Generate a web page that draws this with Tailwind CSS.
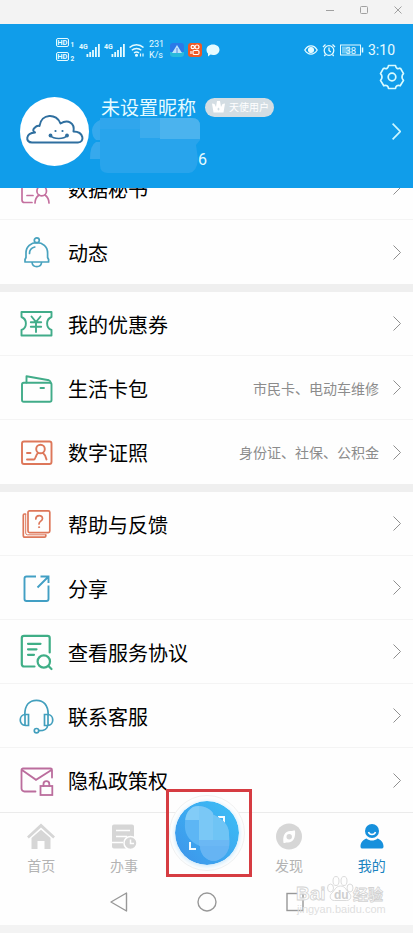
<!DOCTYPE html>
<html lang="zh-CN">

<head>
    <meta charset="UTF-8">
    <meta name="viewport" content="width=device-width, initial-scale=1.0">
    <title>我的</title>
    <script src="https://cdn.jsdelivr.net/npm/@tailwindcss/browser@4"></script>
</head>

<body class="bg-[#f3f3f3] font-['Roboto','Noto_Sans_CJK_SC',sans-serif] text-black">
    <div class="flex flex-col min-h-screen pb-2 overflow-hidden">

        <!-- window bar -->
        <div class="h-6 flex justify-end items-start gap-[18px] pt-0.5 pr-[7px] text-[#a0a0a0]">
            <button aria-label="最小化" class="w-4 h-4 flex items-center justify-center">
                <svg class="w-2 h-2" viewBox="0 0 8 8" fill="none" stroke="currentColor"><path d="M0 4.500h8" /></svg>
            </button>
            <button aria-label="最大化" class="w-4 h-4 flex items-center justify-center">
                <svg class="w-2 h-2" viewBox="0 0 8 8" fill="none" stroke="currentColor"><rect x=".5" y=".5" width="7" height="7" rx="1" /></svg>
            </button>
            <button aria-label="关闭" class="w-4 h-4 flex items-center justify-center">
                <svg class="w-2 h-2" viewBox="0 0 8 8" fill="none" stroke="currentColor"><path d="M.5.5l7 7M7.500.5l-7 7" /></svg>
            </button>
        </div>

        <header class="h-[164px] bg-[#109dea] text-white relative z-10 flex flex-col">
            <!-- status bar -->
            <div class="h-[52px] pl-14 pr-[18px] flex items-center justify-between text-[#e6fbff]">
                <div class="flex items-center gap-1">
                    <svg class="w-[19px] h-6" viewBox="0 0 19 24" fill="none" stroke="currentColor">
                        <rect x=".5" y=".5" width="12" height="8" rx="1.500" />
                        <rect x=".5" y="14.500" width="12" height="8" rx="1.500" />
                        <g fill="currentColor" stroke="none" font-size="7.500" font-weight="700">
                            <text x="1.300" y="7.200">HD</text>
                            <text x="1.300" y="21.200">HD</text>
                            <text x="14.500" y="8.500" font-size="6.500">1</text>
                            <text x="14.500" y="22.500" font-size="6.500">2</text>
                        </g>
                    </svg>
                    <svg class="w-[21px] h-4" viewBox="0 0 21 16" fill="currentColor">
                        <text x="0" y="7" font-size="7" font-weight="700">4G</text>
                        <path d="M7.500 12h1.800v3H7.500zM10.300 10h1.800v5h-1.800zM13.100 8h1.800v7h-1.800zM16 5h1.800v10H16zM19 2h1.800v13H19z" />
                    </svg>
                    <svg class="w-[21px] h-4" viewBox="0 0 21 16" fill="currentColor">
                        <text x="0" y="7" font-size="7" font-weight="700">4G</text>
                        <path d="M7.500 12h1.800v3H7.500zM10.300 10h1.800v5h-1.800zM13.100 8h1.800v7h-1.800zM16 5h1.800v10H16zM19 2h1.800v13H19z" />
                    </svg>
                    <svg class="w-4 h-4" viewBox="0 0 16 16" fill="none" stroke="currentColor" stroke-width="1.500">
                        <path d="M.5 5.500a10 10 0 0 1 14 0M2.800 8.300a7 7 0 0 1 9.500 0M5 11a4 4 0 0 1 5 0" />
                        <circle cx="7.500" cy="13.200" r=".8" fill="currentColor" />
                        <path d="M11.500 11.500v3M14 11.500v3" stroke-width="1.200" />
                    </svg>
                    <p class="w-[17px] text-[9px] leading-[11px]">231<br>K/s</p>
                    <svg class="w-[14px] h-4" viewBox="0 0 14 16">
                        <rect y="1" width="14" height="14" rx="3" fill="#2b79e8" />
                        <path d="M0 10h14v2a3 3 0 0 1-3 3H3a3 3 0 0 1-3-3z" fill="#29b9dc" />
                        <path d="M7 3l5 8H2z" fill="#bfe4fb" />
                        <path d="M7 6v5" stroke="#5b86e5" />
                    </svg>
                    <svg class="w-[14px] h-4" viewBox="0 0 14 16">
                        <rect y="1" width="14" height="14" rx="3" fill="#ee5a26" />
                        <g fill="none" stroke="#fff" stroke-width="1.200">
                            <circle cx="4.800" cy="5" r="1.700" />
                            <circle cx="9" cy="5" r="2" />
                            <rect x="5" y="8.500" width="6" height="4" rx="1.200" />
                            <path d="M3 9v3" />
                        </g>
                    </svg>
                    <svg class="w-[14px] h-4" viewBox="0 0 14 16" fill="currentColor">
                        <path d="M7 2.500c4 0 6.500 2.300 6.500 5.200S11 13 7 13c-.9 0-1.700-.1-2.500-.4L2 14.500v-3C.9 10.500.5 9.200.5 7.700.5 4.800 3 2.500 7 2.500z" />
                    </svg>
                </div>
                <div class="flex items-center gap-1">
                    <svg class="w-[14px] h-4" viewBox="0 0 14 16" fill="none" stroke="currentColor" stroke-width="1.300">
                        <path d="M.8 8C4 2.500 10 2.500 13.200 8 10 13.500 4 13.500.8 8z" />
                        <circle cx="7" cy="8" r="2.400" fill="currentColor" />
                    </svg>
                    <svg class="w-[14px] h-4" viewBox="0 0 14 16" fill="none" stroke="currentColor" stroke-width="1.300">
                        <circle cx="7" cy="8.500" r="4.800" />
                        <path d="M7 5.500v3l1.800 1.500M1 5l2.500-2.500M13 5l-2.500-2.500M3.500 12.500L2.300 14M10.500 12.500l1.200 1.500" />
                    </svg>
                    <svg class="w-6 h-4" viewBox="0 0 24 16" fill="none" stroke="currentColor">
                        <rect x=".5" y="3" width="20" height="10" />
                        <rect x="2" y="4.500" width="8" height="7" fill="currentColor" fill-opacity=".45" stroke="none" />
                        <path d="M22.500 5.500v5" stroke-width="1.500" />
                        <text x="5.500" y="11.500" font-size="9.500" fill="currentColor" stroke="none">38</text>
                    </svg>
                    <span class="text-sm">3:10</span>
                </div>
            </div>

            <button aria-label="设置" class="absolute right-2 top-10">
                <svg class="w-[26px] h-[26px]" viewBox="0 0 26 26" fill="none" stroke="#d9fbff" stroke-width="1.700" stroke-linejoin="round">
                    <path d="M9.500 1.500h7c.3 2.600 1.900 3.600 4.200 2.700l1 .4 2.800 5c-2 1.900-2 4.900 0 6.800l-3.300 5.400c-2.700-.9-4.400 0-4.700 2.700h-7c-.3-2.700-2-3.600-4.700-2.700l-3.300-5.400c2-1.900 2-4.900 0-6.800l2.800-5 1-.4c2.300.9 3.900-.1 4.200-2.700z" />
                    <circle cx="13" cy="13" r="3.800" />
                </svg>
            </button>

            <!-- profile -->
            <div class="flex items-start pl-5 pr-3 pt-[21px]">
                <div class="w-[69px] h-[69px] shrink-0 rounded-full bg-white flex items-center justify-center">
                    <svg class="w-[58px] h-[30px] overflow-visible" viewBox="0 0 58 30" fill="none" stroke="#2f6f9f" stroke-width="2" stroke-linejoin="round">
                        <path d="M6 25.500C-1 25.500-.5 16 9 15.500 4 13 11 8 13.500 9 15-4 31-4 34.500 6.500 42 2 49 6 47.500 14.500 58 14.500 59 25.500 52 25.500z" />
                        <path d="M24.500 18.500c3 4 13.500 4 16.500 0" stroke-width="1.500" />
                        <g fill="#2f6f9f" stroke="none">
                            <circle cx="24.500" cy="18.500" r="1.900" />
                            <circle cx="41" cy="18.500" r="1.900" />
                            <circle cx="29.500" cy="14" r="1.100" />
                            <circle cx="36.500" cy="14" r="1.100" />
                        </g>
                    </svg>
                </div>
                <div class="flex-1 relative pl-3">
                    <div class="flex items-center h-5 gap-[9px]">
                        <h1 class="text-[19px] leading-5 pt-1 text-[#e6fbff]">未设置昵称</h1>
                        <span class="h-[19px] w-[69px] rounded-full bg-[#d3dde3] text-white text-[10px] flex items-center pl-[7px] gap-1">
                            <svg class="w-[13px] h-3" viewBox="0 0 13 12" fill="currentColor">
                                <path fill-rule="evenodd" d="M0 2.500l2.500.5L4 6 5 0h3l1 6 1.500-3 2.500-.5L11.500 11.500h-10zM6.500 6.500L5.300 8l1.200 1.700L7.700 8z" />
                            </svg>
                            天使用户
                        </span>
                    </div>
                    <!-- masked phone number -->
                    <svg class="absolute left-[1px] top-[21px] w-[112px] h-[56px]" viewBox="0 0 112 56">
                        <path d="M10 0h92q8 0 8 8v14l-4 5 2 14q-1 13-9 14H18q-8 0-8-8z" fill="#28a4ec" />
                        <path d="M10 2v20H6q-4-3-4-10 1-7 8-10zM10 24v17H0q0-14 6-17z" fill="#36a9ed" />
                        <path d="M10 0h60v11H10z" fill="#30a6ed" />
                        <path d="M50 0h20v20H50z" fill="#3caced" />
                        <path d="M70 0h32q8 0 8 8v13H70z" fill="#4bb3ee" />
                    </svg>
                    <p class="pl-[97px] pt-[31px] text-base leading-6 relative text-[#e6fbff]">6</p>
                </div>
                <a href="#" aria-label="个人信息" class="pt-[26px]">
                    <svg class="w-[9px] h-[17px]" viewBox="0 0 9 17" fill="none" stroke="#c9f6ff" stroke-width="1.700"><path d="M.6.6l7.600 7.900L.6 16.400" /></svg>
                </a>
            </div>
        </header>

        <!-- menu -->
        <main class="bg-[#efefef] flex-1">
            <ul class="flex flex-col gap-2 -mt-8 text-xl">
                <li class="bg-[#fefefe]">
                    <a href="#" class="h-16 border-b border-[#f4f4f4] pl-5 pr-3 flex items-center">
                        <svg class="w-8 h-8 mr-4 overflow-visible" viewBox="0 0 32 32" fill="none" stroke="#c4709f" stroke-width="1.700" stroke-linecap="round">
                            <path d="M12 30.500H4.500a2.500 2.500 0 0 1-2.500-2.500V8h26v6M7 23.500h6" />
                            <circle cx="21.700" cy="19" r="4.800" />
                            <path d="M15 31c0-3 1.500-6 4-8M29 31c0-3-1.500-6-4-8" />
                        </svg>
                        <span class="flex-1 pt-1">数据秘书</span>
                        <svg class="w-2 h-[15px]" viewBox="0 0 8 15" fill="none" stroke="#8f8f8f"><path d="M.5.5l7 7-7 7" /></svg>
                    </a>
                    <a href="#" class="h-16 pl-5 pr-3 flex items-center">
                        <svg class="w-8 h-8 mr-4 overflow-visible" viewBox="0 0 32 32" fill="none" stroke="#48a2be" stroke-width="1.700" stroke-linecap="round" stroke-linejoin="round">
                            <circle cx="16.800" cy="4.300" r="2.500" />
                            <path d="M5 26v-2.500l1-2V17c0-6.500 5-10.300 10.800-10.300S27.600 10.500 27.600 17v4.500l1 2V26zM12 26.500c.8 5.500 8.800 5.500 9.600 0M9.500 17.500c0-3.300 2-5.800 5.300-6.500" />
                        </svg>
                        <span class="flex-1 pt-1">动态</span>
                        <svg class="w-2 h-[15px]" viewBox="0 0 8 15" fill="none" stroke="#8f8f8f"><path d="M.5.5l7 7-7 7" /></svg>
                    </a>
                </li>
                <li class="bg-[#fefefe]">
                    <a href="#" class="h-16 border-b border-[#f4f4f4] pl-5 pr-3 flex items-center">
                        <svg class="w-8 h-8 mr-4 overflow-visible" viewBox="0 0 32 32" fill="none" stroke="#41ac89" stroke-width="1.900" stroke-linecap="round" stroke-linejoin="round">
                            <path d="M1.500 4H31.500v5a7 7 0 0 0 0 13v5.500H1.500V22a7 7 0 0 0 0-13z" />
                            <path d="M11.500 8.500L16 14l4.500-5.500M16 14v10M10.800 14.300h10.400M10.800 18.800h10.400" />
                        </svg>
                        <span class="flex-1 pt-1">我的优惠券</span>
                        <svg class="w-2 h-[15px]" viewBox="0 0 8 15" fill="none" stroke="#8f8f8f"><path d="M.5.5l7 7-7 7" /></svg>
                    </a>
                    <a href="#" class="h-16 border-b border-[#f4f4f4] pl-5 pr-3 flex items-center">
                        <svg class="w-8 h-8 mr-4 overflow-visible" viewBox="0 0 32 32" fill="none" stroke="#41ac89" stroke-width="1.900" stroke-linecap="round" stroke-linejoin="round">
                            <rect x="2" y="10.800" width="29.500" height="19" rx="1.800" />
                            <path d="M6.500 10.500V4.300L29 8.300c1.200.3 1.700 1 1.700 2.500M20.500 16h3.500" />
                        </svg>
                        <span class="flex-1 pt-1">生活卡包</span>
                        <span class="text-sm text-[#8c8c8c] mr-[14px] pt-0.5">市民卡、电动车维修</span>
                        <svg class="w-2 h-[15px]" viewBox="0 0 8 15" fill="none" stroke="#8f8f8f"><path d="M.5.5l7 7-7 7" /></svg>
                    </a>
                    <a href="#" class="h-16 pl-5 pr-3 flex items-center">
                        <svg class="w-8 h-8 mr-4 overflow-visible" viewBox="0 0 32 32" fill="none" stroke="#dd775a" stroke-width="1.900" stroke-linecap="round">
                            <rect x="2" y="5.500" width="29.500" height="22.500" rx="2" />
                            <circle cx="20.500" cy="13" r="4.300" />
                            <path d="M7 17h3.500M7 23.500h7c1.700 0 1.500-4.500 4-6.500M23 17c2 1.500 3 3.800 3.500 6.500" />
                        </svg>
                        <span class="flex-1 pt-1">数字证照</span>
                        <span class="text-sm text-[#8c8c8c] mr-[14px] pt-0.5">身份证、社保、公积金</span>
                        <svg class="w-2 h-[15px]" viewBox="0 0 8 15" fill="none" stroke="#8f8f8f"><path d="M.5.5l7 7-7 7" /></svg>
                    </a>
                </li>
                <li class="bg-[#fefefe]">
                    <a href="#" class="h-16 border-b border-[#f4f4f4] pl-5 pr-3 flex items-center">
                        <svg class="w-8 h-8 mr-4 overflow-visible" viewBox="0 0 32 32" fill="none" stroke="#dd775a" stroke-width="1.700" stroke-linecap="round">
                            <rect x="8" y="2.800" width="21.800" height="21.800" rx="1.500" />
                            <path d="M5.500 6H4.500A1.200 1.200 0 0 0 3.300 7.200V27.500a1.700 1.700 0 0 0 1.700 1.700h19.500a1.300 1.300 0 0 0 1.300-1.300v-1" />
                            <path d="M5.700 6.500V25a1.800 1.800 0 0 0 1.800 1.800H25" stroke-width="1" />
                            <path d="M15.800 11c0-4.500 6.700-4.500 6.700-.5 0 2.800-3.500 2.500-3.500 5.500" />
                            <circle cx="19" cy="19.200" r=".6" fill="#dd775a" stroke-width=".8" />
                        </svg>
                        <span class="flex-1 pt-1">帮助与反馈</span>
                        <svg class="w-2 h-[15px]" viewBox="0 0 8 15" fill="none" stroke="#8f8f8f"><path d="M.5.5l7 7-7 7" /></svg>
                    </a>
                    <a href="#" class="h-16 border-b border-[#f4f4f4] pl-5 pr-3 flex items-center">
                        <svg class="w-8 h-8 mr-4 overflow-visible" viewBox="0 0 32 32" fill="none" stroke="#429fc4" stroke-width="1.900">
                            <path d="M16 4.500H6.500a2 2 0 0 0-2 2V27a2 2 0 0 0 2 2h20a2 2 0 0 0 2-2V13.500M17.500 15.500l11-11M20.500 4.500h8v6.500" />
                        </svg>
                        <span class="flex-1 pt-1">分享</span>
                        <svg class="w-2 h-[15px]" viewBox="0 0 8 15" fill="none" stroke="#8f8f8f"><path d="M.5.5l7 7-7 7" /></svg>
                    </a>
                    <a href="#" class="h-16 border-b border-[#f4f4f4] pl-5 pr-3 flex items-center">
                        <svg class="w-8 h-8 mr-4 overflow-visible" viewBox="0 0 32 32" fill="none" stroke="#3fae86" stroke-width="2.200" stroke-linecap="round">
                            <path d="M14.500 30.500H4a2.200 2.200 0 0 1-2.200-2.200V2A2.200 2.200 0 0 1 4-.2h23.500A2.200 2.200 0 0 1 29.700 2v14.500M8 7.800h12.500M8 13.300h8.500M8 18.800h6" />
                            <circle cx="23.800" cy="25.500" r="6.200" />
                            <path d="M28.500 30l3 3" />
                        </svg>
                        <span class="flex-1 pt-1">查看服务协议</span>
                        <svg class="w-2 h-[15px]" viewBox="0 0 8 15" fill="none" stroke="#8f8f8f"><path d="M.5.5l7 7-7 7" /></svg>
                    </a>
                    <a href="#" class="h-16 border-b border-[#f4f4f4] pl-5 pr-3 flex items-center">
                        <svg class="w-8 h-8 mr-4 overflow-visible" viewBox="0 0 32 32" fill="none" stroke="#429fbd" stroke-width="1.700" stroke-linecap="round">
                            <path d="M4.800 14.500C4.800 5 9.500.3 16.500.3S28.200 5 28.200 14.500" />
                            <path d="M8.500 14.500v11H5.500C-1.500 25.500-1.500 14.500 5.500 14.500zM5 15v10M24.500 14.500v11h3C34.500 25.500 34.500 14.500 27.500 14.500zM28 15v10" />
                            <path d="M27.500 26c-.3 3.500-3 4.700-8.500 4.700" />
                            <circle cx="16.500" cy="30.700" r="2.200" />
                        </svg>
                        <span class="flex-1 pt-1">联系客服</span>
                        <svg class="w-2 h-[15px]" viewBox="0 0 8 15" fill="none" stroke="#8f8f8f"><path d="M.5.5l7 7-7 7" /></svg>
                    </a>
                    <a href="#" class="h-16 pl-5 pr-3 flex items-center">
                        <svg class="w-8 h-8 mr-4 overflow-visible" viewBox="0 0 32 32" fill="none" stroke="#bb6d9d" stroke-width="1.800" stroke-linecap="round">
                            <path d="M15.500 27.500H4.500a3 3 0 0 1-3-3V6A1.500 1.500 0 0 1 3 4.500h27.500A1.500 1.500 0 0 1 32 6v7.500M2 6l14 9.800L31.500 6" />
                            <rect x="20.500" y="22" width="11.800" height="9" />
                            <path d="M23.500 22v-2c0-3.800 5.800-3.800 5.800 0v2" />
                        </svg>
                        <span class="flex-1 pt-1">隐私政策权</span>
                        <svg class="w-2 h-[15px]" viewBox="0 0 8 15" fill="none" stroke="#8f8f8f"><path d="M.5.5l7 7-7 7" /></svg>
                    </a>
                </li>
            </ul>
        </main>

        <!-- tab bar -->
        <nav class="bg-[#fefefe] border-t border-[#ebebeb] h-[68px] grid grid-cols-5 relative text-sm text-[#b3b3b3]">
            <a href="#" class="flex flex-col items-center pt-[9px] gap-1.5">
                <svg class="w-7 h-7" viewBox="0 0 28 28" fill="#d6d6d6">
                    <path d="M14 1.500l14 13-1.800 2L14 5.500 1.800 16.500 0 14.500z" />
                    <path d="M14 7.800l9.500 8.200V27h-6v-8h-7v8h-6V16z" />
                </svg>
                <span class="leading-5">首页</span>
            </a>
            <a href="#" class="flex flex-col items-center pt-[9px] gap-1.5">
                <svg class="w-7 h-7" viewBox="0 0 28 28">
                    <path d="M4 2.500h18a2 2 0 0 1 2 2V20l-8 6.500H4a2 2 0 0 1-2-2v-20a2 2 0 0 1 2-2z" fill="#d6d6d6" />
                    <path d="M6 8.500h14M6 14.500h11M2 20.500h11" stroke="#fefefe" stroke-width="1.500" />
                    <circle cx="20.500" cy="21" r="6.500" fill="#d6d6d6" stroke="#fefefe" stroke-width="1.500" />
                    <path d="M20.500 17.500V21.500h3.500" fill="none" stroke="#fefefe" stroke-width="1.500" />
                </svg>
                <span class="leading-5">办事</span>
            </a>
            <span></span>
            <a href="#" class="flex flex-col items-center pt-[9px] gap-1.5">
                <svg class="w-7 h-7" viewBox="0 0 28 28">
                    <circle cx="14" cy="14.500" r="13" fill="#d6d6d6" />
                    <path d="M20 8.500c.8 6.500-1.500 12-7 12-1.500 0-2.500-.5-3 .5l-1.500 0c-1-7 1-12 7-12 2 0 3-.5 4.500-.5z" fill="#fefefe" />
                    <circle cx="14.200" cy="14.700" r="2.700" fill="#d6d6d6" />
                </svg>
                <span class="leading-5">发现</span>
            </a>
            <a href="#" class="flex flex-col items-center pt-[9px] gap-1.5 text-[#1b83c0]">
                <svg class="w-7 h-7" viewBox="0 0 28 28" fill="#1790dc">
                    <circle cx="14" cy="9" r="7" />
                    <path d="M10.500 10c1 3.300 6 3.300 7 0" fill="none" stroke="#fefefe" stroke-width="1.500" />
                    <path d="M8.500 16.500c3.300 2.800 7.700 2.800 11 0 3.500 1.300 6 4 6 8 0 1.500-.8 2-2 2h-19c-1.200 0-2-.5-2-2 0-4 2.500-6.700 6-8z" />
                </svg>
                <span class="leading-5">我的</span>
            </a>

            <!-- raised scan button -->
            <button aria-label="扫码" class="absolute left-1/2 -translate-x-1/2 -top-[18px] w-[76px] h-[76px] rounded-full bg-[#fefefe] border border-[#f1f1f1] flex items-center justify-center">
                <svg class="w-16 h-16 rounded-full shadow-[0_1px_5px_#bfe3fa]" viewBox="0 0 64 64">
                    <defs>
                        <linearGradient id="scan" x1="1" y1="0" x2="0" y2="1">
                            <stop offset="0" stop-color="#3cc0f6" />
                            <stop offset="1" stop-color="#3d93ea" />
                        </linearGradient>
                        <clipPath id="smudge">
                            <path d="M18 6c8-3 18 1 21 8 7 3 16 10 15 20 3 14-4 24-14 26-10 0-15-8-15-15-10-4-16-12-15-22 0-9 3-14 8-17z" />
                        </clipPath>
                    </defs>
                    <circle cx="32" cy="32" r="32" fill="url(#scan)" />
                    <path d="M15 41v7h6M43 16h6v7" fill="none" stroke="#f2fbff" stroke-width="2" />
                    <g clip-path="url(#smudge)">
                        <rect width="64" height="64" fill="#5db6f5" />
                        <path d="M10 5h14v14H10z" fill="#82ccf7" />
                        <path d="M24 5h14v34H24z" fill="#7ac8f6" />
                        <path d="M38 14h16v25H38z" fill="#6fc4f5" />
                        <path d="M24 39h30v6H24z" fill="#6bb8f4" />
                        <path d="M24 45h30v19H24z" fill="#66b4f3" />
                    </g>
                </svg>
            </button>
            <!-- red frame around it -->
            <div class="absolute left-1/2 -ml-[41px] -top-6 w-[86px] h-[88px] border-[3px] border-[#d63c42] pointer-events-none"></div>
        </nav>

        <!-- system navigation -->
        <div class="bg-[#fefefe] h-[45px] flex justify-center items-center gap-[68px] pb-0.5 relative">
            <button aria-label="返回" class="w-5 h-5">
                <svg class="w-5 h-5" viewBox="0 0 20 20" fill="none" stroke="#989898" stroke-width="1.400" stroke-linejoin="round"><path d="M17.500 1v18L2 10z" /></svg>
            </button>
            <button aria-label="主屏幕" class="w-5 h-5">
                <svg class="w-5 h-5" viewBox="0 0 20 20" fill="none" stroke="#989898" stroke-width="1.400"><circle cx="10" cy="10" r="9" /></svg>
            </button>
            <button aria-label="最近任务" class="w-5 h-5">
                <svg class="w-5 h-5" viewBox="0 0 20 20" fill="none" stroke="#989898" stroke-width="1.400"><rect x="2" y="1.500" width="16" height="17" /></svg>
            </button>

            <!-- watermark -->
            <svg class="absolute right-6 -top-2 w-24 h-12 font-['Liberation_Sans','Noto_Sans_CJK_SC',sans-serif]" viewBox="0 0 96 48" fill="#fefefe" stroke="#d2d2d2" stroke-width=".8">
                <text x="3" y="28" font-size="19" font-weight="700">Bai</text>
                <ellipse cx="37.500" cy="16" rx="3" ry="4" />
                <ellipse cx="43" cy="9" rx="3" ry="4.500" />
                <ellipse cx="51" cy="9" rx="3" ry="4.500" />
                <ellipse cx="57" cy="16" rx="3" ry="4" />
                <path d="M47.500 14c5 0 6 5 9 7.500 2.500 2.500 1.500 7-3 7-4 0-8 0-12 0-4.500 0-5.500-4.500-3-7C41.500 19 42.500 14 47.500 14z" />
                <text x="41" y="27" font-size="12" font-weight="700" fill="#cfcfcf" stroke="none">du</text>
                <text x="60" y="28" font-size="15" font-weight="700">经验</text>
                <text x="4" y="41" font-size="11" fill="#dedede" stroke="none">jingyan.baidu.com</text>
            </svg>
        </div>
    </div>
</body>

</html>
